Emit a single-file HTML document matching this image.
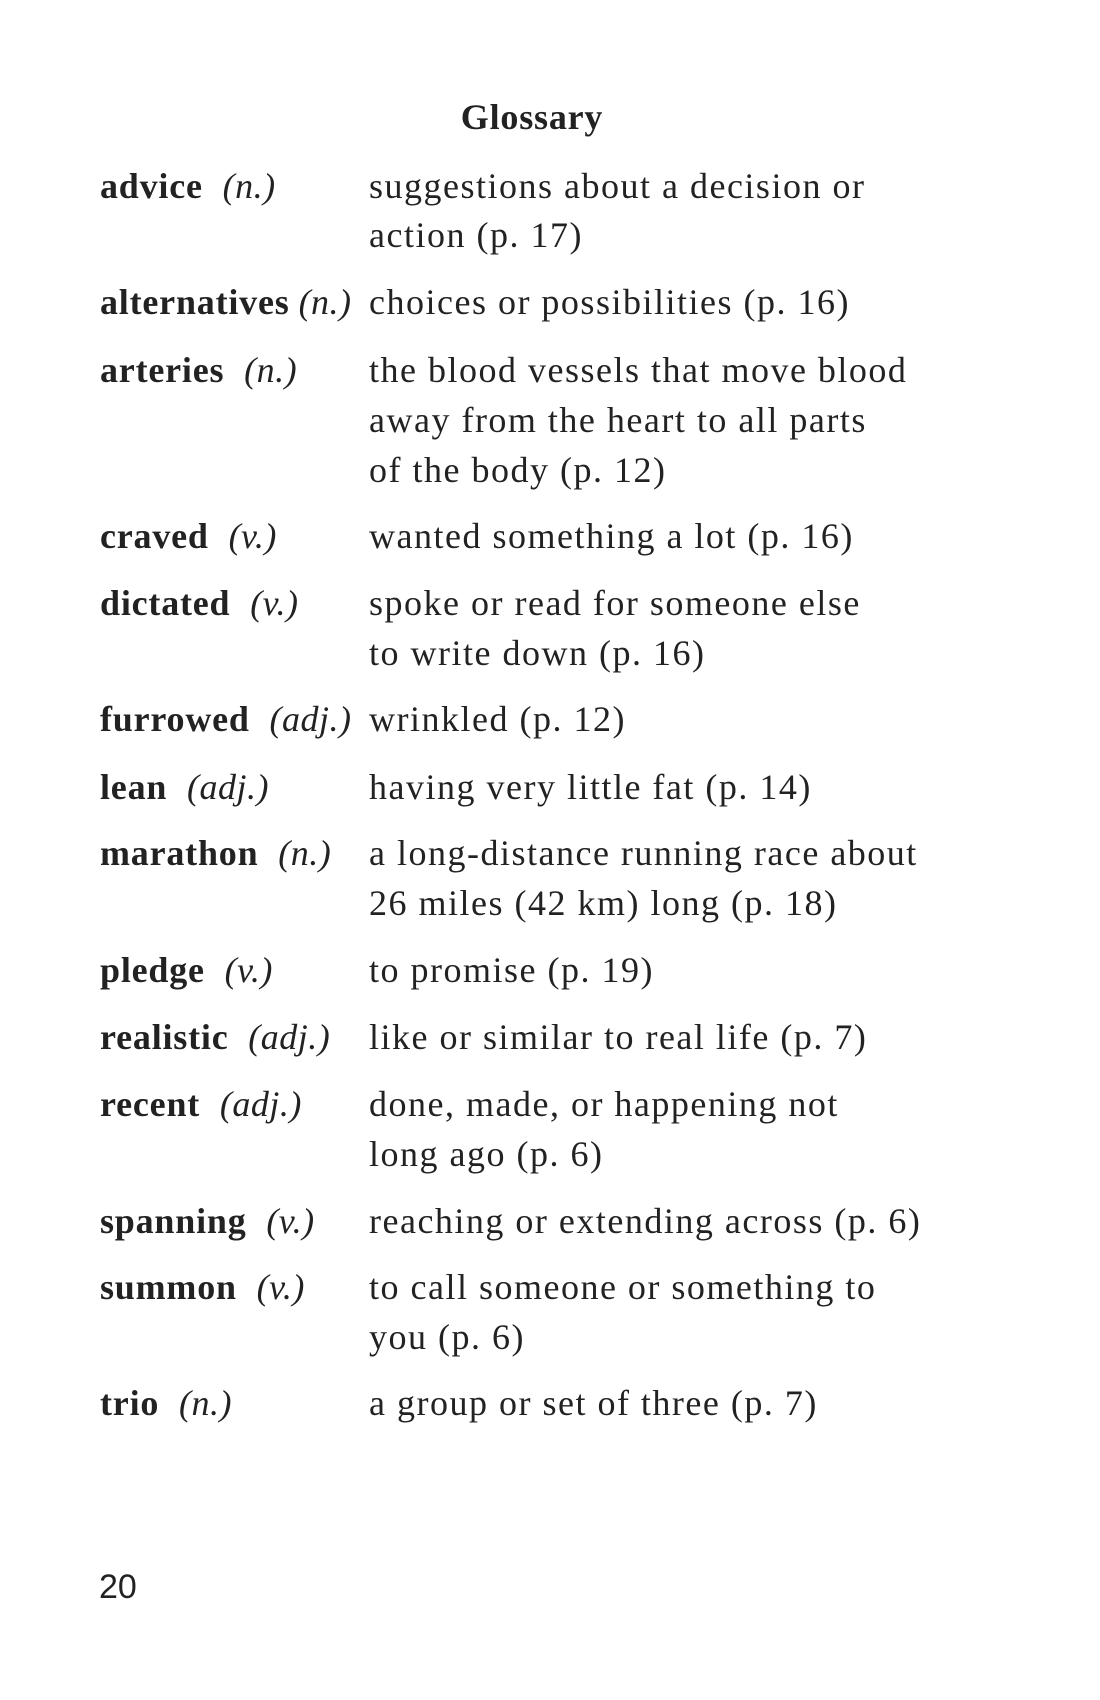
<!DOCTYPE html>
<html><head><meta charset="utf-8"><style>
body{margin:0;width:1100px;height:1700px;background:#fff;position:relative;font-family:"Liberation Serif",serif;color:#222;}
.l{position:absolute;height:50px;line-height:50px;font-size:36px;white-space:nowrap;letter-spacing:1.5px}
.t{left:100px;font-weight:bold;letter-spacing:0.8px}
.t i{font-weight:normal;margin-left:10px;letter-spacing:0.5px}
.d{left:369px}
</style></head><body>
<div class="l" style="left:0;width:1064px;text-align:center;top:92px;font-weight:bold;letter-spacing:0.8px">Glossary</div>
<div class="l t" style="top:161px">advice <i>(n.)</i></div>
<div class="l d" style="top:161px">suggestions about a decision or</div>
<div class="l d" style="top:210px">action (p. 17)</div>
<div class="l t" style="top:277px">alternatives<i style="margin-left:9px">(n.)</i></div>
<div class="l d" style="top:277px">choices or possibilities (p. 16)</div>
<div class="l t" style="top:345px">arteries <i>(n.)</i></div>
<div class="l d" style="top:345px">the blood vessels that move blood</div>
<div class="l d" style="top:395px">away from the heart to all parts</div>
<div class="l d" style="top:445px">of the body (p. 12)</div>
<div class="l t" style="top:511px">craved <i>(v.)</i></div>
<div class="l d" style="top:511px">wanted something a lot (p. 16)</div>
<div class="l t" style="top:578px">dictated <i>(v.)</i></div>
<div class="l d" style="top:578px">spoke or read for someone else</div>
<div class="l d" style="top:628px">to write down (p. 16)</div>
<div class="l t" style="top:694px">furrowed <i>(adj.)</i></div>
<div class="l d" style="top:694px">wrinkled (p. 12)</div>
<div class="l t" style="top:762px">lean <i>(adj.)</i></div>
<div class="l d" style="top:762px">having very little fat (p. 14)</div>
<div class="l t" style="top:828px">marathon <i>(n.)</i></div>
<div class="l d" style="top:828px">a long-distance running race about</div>
<div class="l d" style="top:878px">26 miles (42 km) long (p. 18)</div>
<div class="l t" style="top:945px">pledge <i>(v.)</i></div>
<div class="l d" style="top:945px">to promise (p. 19)</div>
<div class="l t" style="top:1012px">realistic <i>(adj.)</i></div>
<div class="l d" style="top:1012px">like or similar to real life (p. 7)</div>
<div class="l t" style="top:1079px">recent <i>(adj.)</i></div>
<div class="l d" style="top:1079px">done, made, or happening not</div>
<div class="l d" style="top:1129px">long ago (p. 6)</div>
<div class="l t" style="top:1196px">spanning <i>(v.)</i></div>
<div class="l d" style="top:1196px">reaching or extending across (p. 6)</div>
<div class="l t" style="top:1262px">summon <i>(v.)</i></div>
<div class="l d" style="top:1262px">to call someone or something to</div>
<div class="l d" style="top:1312px">you (p. 6)</div>
<div class="l t" style="top:1378px">trio <i>(n.)</i></div>
<div class="l d" style="top:1378px">a group or set of three (p. 7)</div>
<div class="l" style="left:99px;top:1562px;font-family:'Liberation Sans',sans-serif;font-size:34px;letter-spacing:0">20</div>
</body></html>
